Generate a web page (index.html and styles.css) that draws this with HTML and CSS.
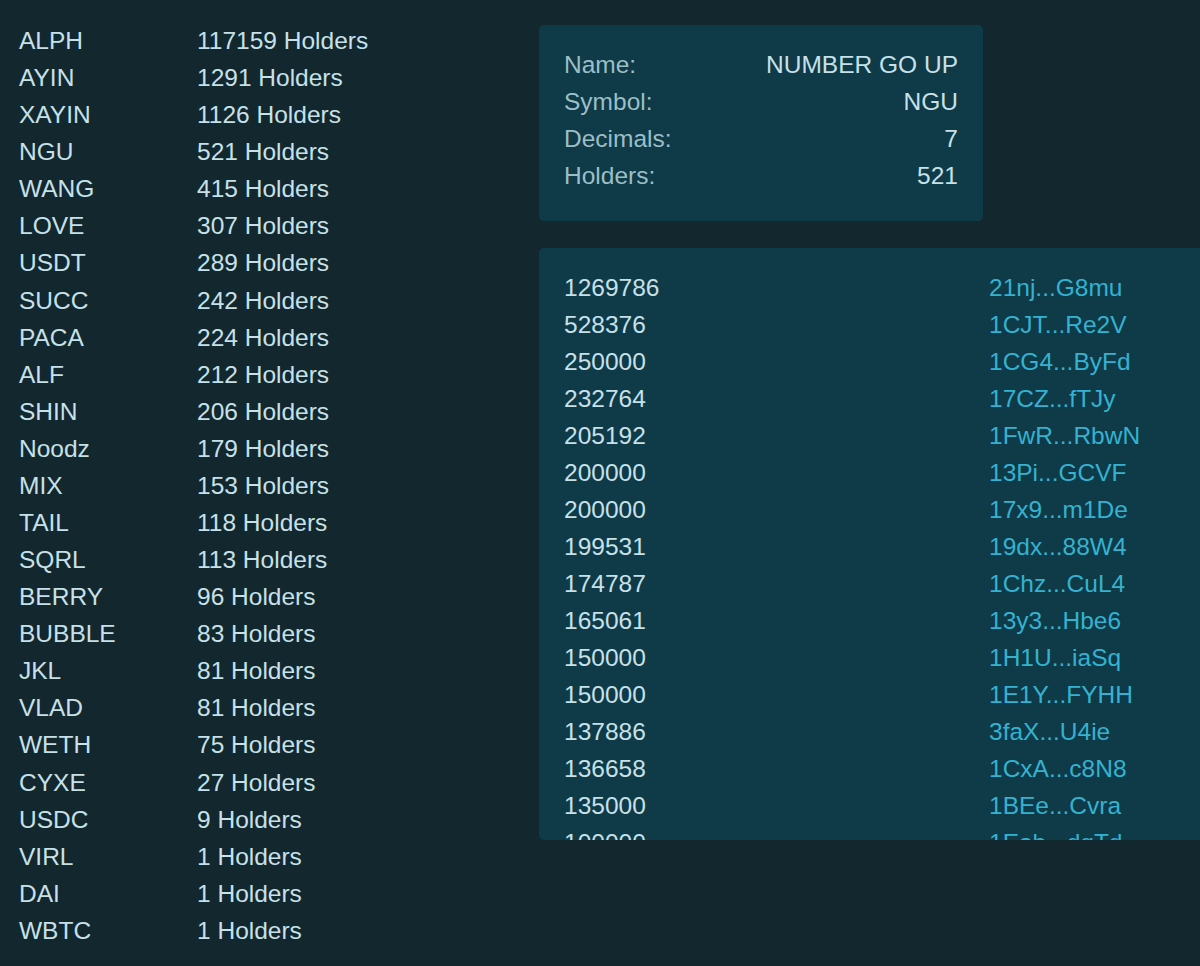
FILE: index.html
```html
<!DOCTYPE html>
<html lang="en">
<head>
<meta charset="utf-8">
<title>Tokens</title>
<link rel="stylesheet" href="styles.css">
</head>
<body>
<div class="page">
  <div class="tokens">
    <div class="tok"><span class="sym">ALPH</span><span class="cnt">117159 Holders</span></div>
    <div class="tok"><span class="sym">AYIN</span><span class="cnt">1291 Holders</span></div>
    <div class="tok"><span class="sym">XAYIN</span><span class="cnt">1126 Holders</span></div>
    <div class="tok"><span class="sym">NGU</span><span class="cnt">521 Holders</span></div>
    <div class="tok"><span class="sym">WANG</span><span class="cnt">415 Holders</span></div>
    <div class="tok"><span class="sym">LOVE</span><span class="cnt">307 Holders</span></div>
    <div class="tok"><span class="sym">USDT</span><span class="cnt">289 Holders</span></div>
    <div class="tok"><span class="sym">SUCC</span><span class="cnt">242 Holders</span></div>
    <div class="tok"><span class="sym">PACA</span><span class="cnt">224 Holders</span></div>
    <div class="tok"><span class="sym">ALF</span><span class="cnt">212 Holders</span></div>
    <div class="tok"><span class="sym">SHIN</span><span class="cnt">206 Holders</span></div>
    <div class="tok"><span class="sym">Noodz</span><span class="cnt">179 Holders</span></div>
    <div class="tok"><span class="sym">MIX</span><span class="cnt">153 Holders</span></div>
    <div class="tok"><span class="sym">TAIL</span><span class="cnt">118 Holders</span></div>
    <div class="tok"><span class="sym">SQRL</span><span class="cnt">113 Holders</span></div>
    <div class="tok"><span class="sym">BERRY</span><span class="cnt">96 Holders</span></div>
    <div class="tok"><span class="sym">BUBBLE</span><span class="cnt">83 Holders</span></div>
    <div class="tok"><span class="sym">JKL</span><span class="cnt">81 Holders</span></div>
    <div class="tok"><span class="sym">VLAD</span><span class="cnt">81 Holders</span></div>
    <div class="tok"><span class="sym">WETH</span><span class="cnt">75 Holders</span></div>
    <div class="tok"><span class="sym">CYXE</span><span class="cnt">27 Holders</span></div>
    <div class="tok"><span class="sym">USDC</span><span class="cnt">9 Holders</span></div>
    <div class="tok"><span class="sym">VIRL</span><span class="cnt">1 Holders</span></div>
    <div class="tok"><span class="sym">DAI</span><span class="cnt">1 Holders</span></div>
    <div class="tok"><span class="sym">WBTC</span><span class="cnt">1 Holders</span></div>
  </div>
  <div class="detail">
    <div class="card info">
      <div class="irow"><span class="lbl">Name:</span><span class="val">NUMBER GO UP</span></div>
      <div class="irow"><span class="lbl">Symbol:</span><span class="val">NGU</span></div>
      <div class="irow"><span class="lbl">Decimals:</span><span class="val">7</span></div>
      <div class="irow"><span class="lbl">Holders:</span><span class="val">521</span></div>
    </div>
    <div class="card holders">
      <div class="hrow"><span class="amt">1269786</span><a class="addr">21nj...G8mu</a></div>
      <div class="hrow"><span class="amt">528376</span><a class="addr">1CJT...Re2V</a></div>
      <div class="hrow"><span class="amt">250000</span><a class="addr">1CG4...ByFd</a></div>
      <div class="hrow"><span class="amt">232764</span><a class="addr">17CZ...fTJy</a></div>
      <div class="hrow"><span class="amt">205192</span><a class="addr">1FwR...RbwN</a></div>
      <div class="hrow"><span class="amt">200000</span><a class="addr">13Pi...GCVF</a></div>
      <div class="hrow"><span class="amt">200000</span><a class="addr">17x9...m1De</a></div>
      <div class="hrow"><span class="amt">199531</span><a class="addr">19dx...88W4</a></div>
      <div class="hrow"><span class="amt">174787</span><a class="addr">1Chz...CuL4</a></div>
      <div class="hrow"><span class="amt">165061</span><a class="addr">13y3...Hbe6</a></div>
      <div class="hrow"><span class="amt">150000</span><a class="addr">1H1U...iaSq</a></div>
      <div class="hrow"><span class="amt">150000</span><a class="addr">1E1Y...FYHH</a></div>
      <div class="hrow"><span class="amt">137886</span><a class="addr">3faX...U4ie</a></div>
      <div class="hrow"><span class="amt">136658</span><a class="addr">1CxA...c8N8</a></div>
      <div class="hrow"><span class="amt">135000</span><a class="addr">1BEe...Cvra</a></div>
      <div class="hrow"><span class="amt">100000</span><a class="addr">1Eab...dqTd</a></div>
    </div>
  </div>
</div>
</body>
</html>
```

FILE: styles.css
```css
html, body {
  margin: 0;
  padding: 0;
  overflow: hidden;
}
body {
  background: #13272f;
  color: #c6e1e8;
  font-family: "Liberation Sans", Arial, sans-serif;
  font-size: 24.5px;
  line-height: 37px;
  width: 1200px;
  height: 966px;
}
.page {
  display: flex;
  padding: 22px 0 0 19px;
}
.tokens {
  width: 520px;
  flex: none;
}
.tok {
  display: grid;
  grid-template-columns: 178px auto;
  height: 37.08px;
}
.detail {
  display: flex;
  flex-direction: column;
  gap: 27px;
  padding-top: 3px;
  flex: none;
}
.card {
  background: #0f3a48;
  border-radius: 5px;
  box-sizing: border-box;
}
.info {
  width: 444px;
  padding: 21px 25px 27px;
}
.irow {
  display: flex;
  justify-content: space-between;
  height: 37px;
}
.lbl {
  color: #9bbfc6;
}
.val {
  color: #c6e1e8;
}
.holders {
  width: 900px;
  height: 592px;
  overflow: hidden;
  padding: 21px 25px;
}
.hrow {
  display: grid;
  grid-template-columns: 425px 425px;
  height: 37px;
}
.amt {
  color: #c6e1e8;
}
.addr {
  color: #34b2d0;
  text-decoration: none;
}
```
